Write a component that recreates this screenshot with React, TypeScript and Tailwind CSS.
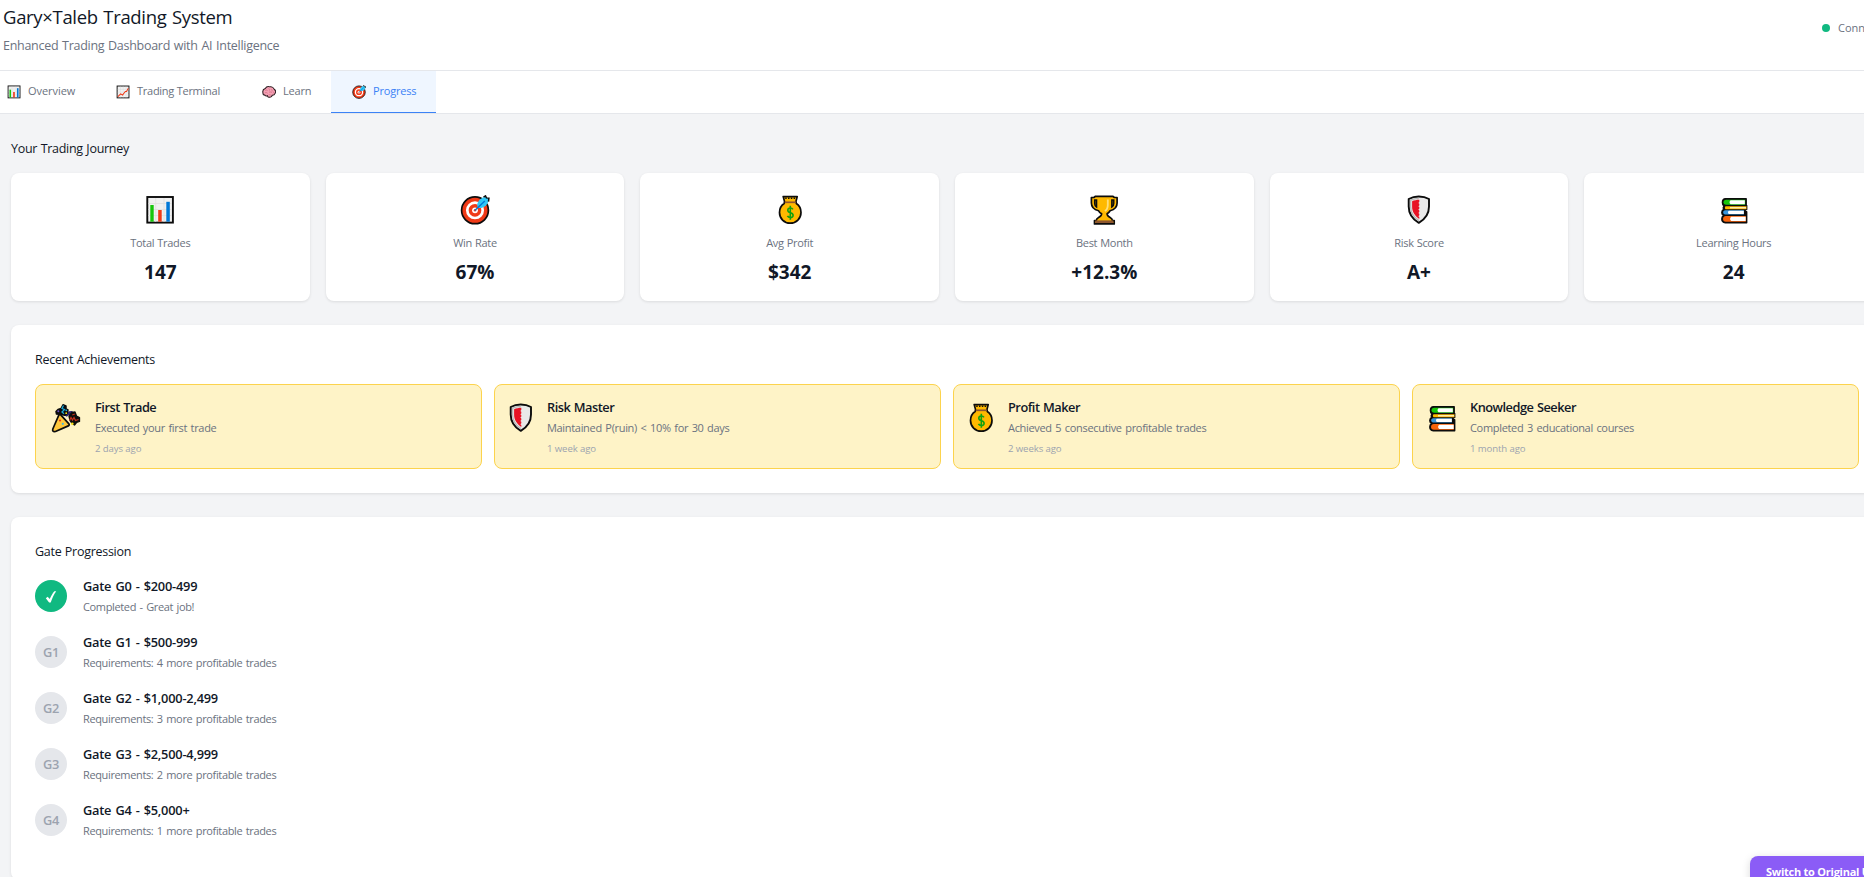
import type { ComponentType, SVGProps } from 'react';

type Icon = ComponentType<SVGProps<SVGSVGElement>>;

const ChartIcon: Icon = (props) => (
  <svg viewBox="0 0 30 30" {...props}>
    <rect x="2.3" y="2" width="25.6" height="25.6" fill="#f0f0f0" stroke="#0c0c0c" strokeWidth="1.9" />
    <path d="M3.2 8.5H27M3.2 14.5H27M3.2 20.5H27M10.7 3v24M19 3v24" stroke="#dcdcdc" strokeWidth=".7" />
    <rect x="5.3" y="10" width="3.4" height="16.7" fill="#16c60c" />
    <rect x="13.2" y="15" width="3.5" height="11.7" fill="#f03a17" />
    <rect x="21.3" y="6.8" width="3.5" height="19.9" fill="#0078d7" />
  </svg>
);

const TrendIcon: Icon = (props) => (
  <svg viewBox="0 0 30 30" {...props}>
    <rect x="2.4" y="2.2" width="25.4" height="25.4" fill="#f2f2f2" stroke="#0c0c0c" strokeWidth="2" />
    <path d="M3.5 9.5H27M3.5 15.5H27M3.5 21.5H27M9.5 3v24M15.5 3v24M21.5 3v24" stroke="#d8d8d8" strokeWidth=".9" />
    <path d="M4 25 10 19l4 2.500 6-7.500 2.500 0L26.500 7" fill="none" stroke="#f03a17" strokeWidth="2.200" />
  </svg>
);

const BrainIcon: Icon = (props) => (
  <svg viewBox="0 0 30 30" {...props}>
    <path
      d="M2 17C.8 12 4 8.500 7 7.500 9 4 14 3 17 4c4-.8 8 2 9 5 3 2 3.800 6 2 9-1 3-4 4-6 4-1 3-4 5-6.500 4-2 .5-3.500-1-4-3-3 1-5 0-5.500-1.500C3.500 21.500 2 19.500 2 17Z"
      fill="#f4a0b3"
      stroke="#2a1a1e"
      strokeWidth="2.200"
    />
    <path
      d="M7 12c2-2 4-1 5 0M14 8c2 0 3 2 2 4M20 9c2 1 2 3 1 5M6 17c3-2 5 0 6 1M15 16c2-2 5-1 6 1M24 14c1 1 1 3 0 4M14 21c2-1 4 0 5 1"
      fill="none"
      stroke="#c8607a"
      strokeWidth="1.300"
    />
  </svg>
);

const TargetIcon: Icon = (props) => (
  <svg viewBox="0 0 30 30" {...props}>
    <circle cx="15" cy="15.300" r="13.400" fill="#f03a17" stroke="#0c0c0c" strokeWidth="1.700" />
    <circle cx="15" cy="15.300" r="7.700" fill="none" stroke="#fff" strokeWidth="2.700" />
    <circle cx="15" cy="15.300" r="2.900" fill="#fff" />
    <circle cx="15" cy="15.300" r="1.200" fill="#f03a17" />
    <path d="M17.200 11.200C17 7 19.500 3.600 24 2.200l1.400-.8.800 1.600 2.600.1-.6 3.700C26.800 11 23 13.700 18.600 13Z" fill="#2fc8f7" />
    <path d="M23.500 2.200 25.500.9l.9 2 2.500.2-.4 3.600" fill="none" stroke="#0c0c0c" strokeWidth="1.500" />
    <path d="m14.800 15.500 10-9.600" stroke="#0078d7" strokeWidth="1.400" />
  </svg>
);

const MoneyIcon: Icon = (props) => (
  <svg viewBox="0 0 30 30" {...props}>
    <path
      d="M8.200 1.600h14l-1.200 4.800.3 2.100C24.400 10.500 26 14 26 17.500c0 6-4.700 10.700-10.800 10.700S4.500 23.500 4.500 17.500c0-3.500 1.600-7 4.700-9l.3-2.100Z"
      fill="#ffb900"
      stroke="#0c0c0c"
      strokeWidth="1.700"
      strokeLinejoin="round"
    />
    <path d="M10.200 3.200h10" stroke="#0c0c0c" strokeWidth="1.400" strokeDasharray="1.500 1.300" />
    <path d="M9.800 7.300h11" stroke="#8e562e" strokeWidth="1.700" />
    <path
      d="M17.900 14.300c-.5-1-1.500-1.300-2.600-1.300-1.500 0-2.500.8-2.500 2.200 0 3.300 5.300 1.700 5.300 5 0 1.500-1.200 2.300-2.800 2.300-1.300 0-2.300-.5-2.800-1.600M15.300 10.800v14"
      fill="none"
      stroke="#13a10e"
      strokeWidth="1.600"
    />
  </svg>
);

const TrophyIcon: Icon = (props) => (
  <svg viewBox="0 0 30 30" {...props}>
    <path
      d="M6.500 1.300h17.200l1.700 1.200h2.700v5.500c0 4-3.200 6.800-7 7.800-.7 1.200-1.800 2.200-3 3 0 1.700 1.200 2.800 3 3.800 1.500.8 2.300 2 2.300 3h1.800v3.300H5.500v-3.300h1.800c0-1 .8-2.200 2.300-3 1.800-1 3-2.100 3-3.800-1.300-.8-2.400-1.800-3-3-4-1-7.200-3.800-7.200-7.800V2.500h2.500Z"
      fill="#ffb900"
      stroke="#0c0c0c"
      strokeWidth="1.700"
      strokeLinejoin="round"
    />
    <path d="M5.600 5v3.600c0 1.600.8 2.800 2 3.500V5ZM24.800 5v3.600c0 1.600-.8 2.800-2 3.500V5Z" fill="#6b5200" stroke="#0c0c0c" strokeWidth="1.400" />
    <path d="M18.800 4.500V10c0 3-1 5-3 6" fill="none" stroke="#ffdf7a" strokeWidth="1.800" />
    <rect x="6.300" y="25.400" width="18" height="2.600" fill="#8e562e" />
  </svg>
);

const ShieldIcon: Icon = (props) => (
  <svg viewBox="0 0 30 30" {...props}>
    <path
      d="M14.800 1.500C18.500 1.500 22 2.300 25 4v7.500c0 7-4 12.800-10.200 16.300C8.600 24.300 4.700 18.500 4.700 11.500V4c3-1.700 6.400-2.500 10.100-2.500Z"
      fill="#e9e9e9"
      stroke="#0c0c0c"
      strokeWidth="1.900"
      strokeLinejoin="round"
    />
    <path d="M14.800 3.400c-3 0-5.700.6-8.200 1.800v6.300c0 6 3.200 10.900 8.200 14.100" fill="none" stroke="#b9b9b9" strokeWidth="1.300" />
    <path
      d="M15.300 4.800c-2.500 0-5 .5-7.200 1.500v5.200c0 5.200 2.700 9.500 7.200 12.500v-2l-1-.8 1-.9v-1.600l-1-.8 1-.9v-1.600l-1-.8 1-.9v-1.600l-1-.8 1-.9V8.800l-1-.8 1-.9Z"
      fill="#e81224"
    />
  </svg>
);

const BooksIcon: Icon = (props) => (
  <svg viewBox="0 0 30 30" {...props}>
    <path
      d="M6.500 3.700h20.700v6.700h.5v4.200h-1.500v2.200h1.500v10.900H6.200C3.800 27.700 2.800 26 2.800 24c0-1.600.6-2.700 1.500-3.500-1-.8-1.500-1.800-1.500-3 0-1.500.8-2.600 2-3.300-.6-1-.6-2.300.1-3.300C3.800 10.200 3.400 9 3.400 7.500c0-2.200 1.100-3.800 3.100-3.800Z"
      fill="#0c0c0c"
      stroke="#0c0c0c"
      strokeWidth="1.400"
      strokeLinejoin="round"
    />
    <path d="M7.200 4.800h19v5H7.200c-1.800 0-2.700-1-2.700-2.500s.9-2.500 2.700-2.500Z" fill="#16c60c" />
    <path d="M11.500 5.200h14.300v4H11.500c-1.300-1.200-1.300-2.800 0-4Z" fill="#fff" />
    <path d="M6.500 11.200h21v3h-21c-.8-.8-.8-2.200 0-3Z" fill="#ffb900" />
    <path d="M11 12.100h16v1.300H11Z" fill="#fff3c4" />
    <path d="M6.200 15.300h18.700v4.100H6.200c-2.700 0-2.700-4.100 0-4.100Z" fill="#3a96dd" />
    <path d="M9.800 15.700h15v3.300h-15c-1.100-1-1.100-2.300 0-3.300Z" fill="#fff" />
    <path d="M6.800 21h20v5.800h-20c-3.700 0-3.700-5.800 0-5.800Z" fill="#f7630c" />
    <path d="M12.200 21.700h14.500v4.300H12.200c-1.500-1.200-1.500-3.100 0-4.300Z" fill="#fff" />
  </svg>
);

const PartyIcon: Icon = (props) => (
  <svg viewBox="0 0 30 30" {...props}>
    <path d="M14.500 13c1.500-2.500 4.500-3.500 7-3.300" fill="none" stroke="#2c2270" strokeWidth="3.200" />
    <path
      d="m7 6.500 3-1L12 1.800 15 3v3l2 1-1 3.500-2.200 1.800-3.300-.8L5.500 11 5 8.500Z"
      fill="#0c0c0c"
      stroke="#0c0c0c"
      strokeWidth="1.500"
      strokeLinejoin="round"
    />
    <path
      d="m18 13 3-3.500 3-.5 1.500 4 3 1.500v4l-3 1-2 2.500-2.500-1.500-2-3Z"
      fill="#0c0c0c"
      stroke="#0c0c0c"
      strokeWidth="1.300"
      strokeLinejoin="round"
    />
    <path d="m12.500 2.500-1.500 3 2.500 1-2.500 2.500 2 1.700" fill="none" stroke="#1ba8d8" strokeWidth="1.300" />
    <path d="m18.500 17.500 1.500-3 1.500 2.500 1.500-2.500 1.500 3 3-1" fill="none" stroke="#c5301c" strokeWidth="1.300" />
    <path d="m21.300 12 2.500-1" stroke="#c5301c" strokeWidth="1.300" />
    <circle cx="7.300" cy="8.300" r="1" fill="#6b52c8" />
    <circle cx="15.300" cy="7.300" r=".9" fill="#1ba8d8" />
    <circle cx="21.300" cy="20.800" r="1.300" fill="#f9e21b" />
    <circle cx="15.200" cy="10.200" r=".9" fill="#f9e21b" />
    <path
      d="M7.800 12.200c1-.8 1.800-.6 2.600.4l7.300 8c.8 1 .7 1.700-.4 2.300L4.500 28.500C2 29 1.300 28 1.800 26Z"
      fill="#ffc83d"
      stroke="#0c0c0c"
      strokeWidth="1.700"
      strokeLinejoin="round"
    />
    <circle cx="9" cy="17.500" r="1.100" fill="#f03a17" />
    <circle cx="11.800" cy="20.800" r="1.100" fill="#3ab8e8" />
  </svg>
);

const CheckIcon: Icon = (props) => (
  <svg viewBox="0 0 12 12" {...props}>
    <path d="M.8 7.200 2.700 5.700l2 2.300C6.200 4.800 7.600 2.200 9.400.2h1.800C8.800 3.600 7.200 7 5.700 11.600H4.100Z" fill="#fff" />
  </svg>
);

const tabs: { icon: Icon; label: string; box: string }[] = [
  { icon: ChartIcon, label: 'Overview', box: 'w-[96px] pl-[7px] gap-[7px] tracking-[-0.05px]' },
  { icon: TrendIcon, label: 'Trading Terminal', box: 'w-[146px] pl-5 gap-[7px] tracking-[-0.26px]' },
  { icon: BrainIcon, label: 'Learn', box: 'w-[89px] pl-5 gap-[7px] tracking-[-0.2px]' },
  { icon: TargetIcon, label: 'Progress', box: 'w-[105px] pl-[21px] gap-[7px] tracking-[-0.2px]' },
];

const stats: { icon: Icon; label: string; value: string }[] = [
  { icon: ChartIcon, label: 'Total Trades', value: '147' },
  { icon: TargetIcon, label: 'Win Rate', value: '67%' },
  { icon: MoneyIcon, label: 'Avg Profit', value: '$342' },
  { icon: TrophyIcon, label: 'Best Month', value: '+12.3%' },
  { icon: ShieldIcon, label: 'Risk Score', value: 'A+' },
  { icon: BooksIcon, label: 'Learning Hours', value: '24' },
];

const achievements: { icon: Icon; box: string; title: string; text: string; time: string }[] = [
  { icon: PartyIcon, box: 'w-[31px]', title: 'First Trade', text: 'Executed your first trade', time: '2 days ago' },
  { icon: ShieldIcon, box: 'w-[24px]', title: 'Risk Master', text: 'Maintained P(ruin) < 10% for 30 days', time: '1 week ago' },
  { icon: MoneyIcon, box: 'w-[26px]', title: 'Profit Maker', text: 'Achieved 5 consecutive profitable trades', time: '2 weeks ago' },
  { icon: BooksIcon, box: 'w-[29px]', title: 'Knowledge Seeker', text: 'Completed 3 educational courses', time: '1 month ago' },
];

const gates = [
  { id: 'G0', range: '$200-499', note: 'Completed - Great job!', done: true },
  { id: 'G1', range: '$500-999', note: 'Requirements: 4 more profitable trades', done: false },
  { id: 'G2', range: '$1,000-2,499', note: 'Requirements: 3 more profitable trades', done: false },
  { id: 'G3', range: '$2,500-4,999', note: 'Requirements: 2 more profitable trades', done: false },
  { id: 'G4', range: '$5,000+', note: 'Requirements: 1 more profitable trades', done: false },
];

function Heading({ children }: { children: string }) {
  return (
    <h2 className="mb-3.5 pt-px text-[12.5px] leading-5 tracking-[-0.28px] text-[#111827] [word-spacing:0.5px]">
      {children}
    </h2>
  );
}

export default function App() {
  return (
    <div className="relative h-[877px] w-full overflow-hidden bg-[#f3f4f6] font-['Open_Sans','Noto_Sans',sans-serif] whitespace-nowrap text-[#111827]">
      <div className="w-[1894px]">
        <header className="flex h-[71px] justify-between border-b border-[#e5e7eb] bg-white pl-[3px]">
          <div className="pt-[5px]">
            <h1 className="text-[18.5px] leading-6 tracking-[-0.32px] [word-spacing:1px]">Gary×Taleb Trading System</h1>
            <p className="mt-[7px] text-[12.5px] leading-5 tracking-[-0.28px] text-[#6b7280] [word-spacing:0.8px]">
              Enhanced Trading Dashboard with AI Intelligence
            </p>
          </div>
          <div className="mt-5 flex h-4 w-[72px] items-center gap-2 self-start text-[11px] leading-4 text-[#6b7280]">
            <span className="size-2 shrink-0 rounded-full bg-[#10b981]" />
            Connected
          </div>
        </header>

        <nav className="flex h-[43px] border-b border-[#e5e7eb] bg-white">
          {tabs.map(({ icon: TabIcon, label, box }) => (
            <button
              key={label}
              className={`flex items-center border-b text-[11px] font-medium ${box} ${
                label === 'Progress' ? 'border-[#3b82f6] bg-[#eff6ff] text-[#3b82f6]' : 'border-transparent text-[#6b7280]'
              }`}
            >
              <TabIcon className="size-3.5 shrink-0" />
              {label}
            </button>
          ))}
        </nav>

        <main className="px-[11px] pt-6">
          <Heading>Your Trading Journey</Heading>
          <div className="mb-6 grid grid-cols-6 gap-4">
            {stats.map(({ icon: StatIcon, label, value }) => (
              <div
                key={label}
                className="flex h-32 flex-col items-center rounded-lg bg-white pt-[22px] shadow-[0_1px_3px_rgba(0,0,0,0.1)]"
              >
                <StatIcon className="size-[30px]" />
                <div className="mt-2.5 text-[11px] leading-4 tracking-[-0.3px] text-[#6b7280] [word-spacing:0.5px]">{label}</div>
                <div className="mt-[9px] text-[19px] leading-6 font-bold">{value}</div>
              </div>
            ))}
          </div>

          <section className="mb-6 h-[168px] rounded-lg bg-white p-6 shadow-[0_1px_3px_rgba(0,0,0,0.1)]">
            <Heading>Recent Achievements</Heading>
            <div className="grid grid-cols-4 gap-3">
              {achievements.map(({ icon: AwardIcon, box, title, text, time }) => (
                <div key={title} className="flex h-[85px] gap-3 rounded-lg border border-[#fcd34d] bg-[#fef3c7] px-4">
                  <div className={`mt-[18px] flex shrink-0 justify-center ${box}`}>
                    <AwardIcon className="mr-[3px] -ml-px size-[30px] shrink-0" />
                  </div>
                  <div className="pt-[13px]">
                    <div className="text-[12.8px] leading-[18px] font-semibold tracking-[-0.5px] [word-spacing:0.7px]">{title}</div>
                    <div className="mt-1 text-[11px] leading-4 tracking-[-0.32px] text-[#6b7280] [word-spacing:1px]">{text}</div>
                    <div className="mt-1.5 text-[9.6px] leading-[14px] tracking-[-0.1px] text-[#9ca3af]">{time}</div>
                  </div>
                </div>
              ))}
            </div>
          </section>

          <section className="h-[363px] rounded-lg bg-white p-6 shadow-[0_1px_3px_rgba(0,0,0,0.1)]">
            <Heading>Gate Progression</Heading>
            <div className="flex flex-col gap-4">
              {gates.map(({ id, range, note, done }) => (
                <div key={id} className="flex h-10 items-center gap-4">
                  <div
                    className={`flex size-8 shrink-0 items-center justify-center rounded-full pt-px text-[12.8px] font-semibold tracking-[-0.3px] ${
                      done ? 'bg-[#10b981] text-white' : 'bg-[#e5e7eb] text-[#9ca3af]'
                    }`}
                  >
                    {done ? <CheckIcon className="size-3" /> : id}
                  </div>
                  <div className="pb-0.5">
                    <div className="text-[12.8px] leading-5 font-semibold tracking-[-0.22px] [word-spacing:1px]">
                      Gate {id} - {range}
                    </div>
                    <div className="mt-[3px] text-[11px] leading-4 tracking-[-0.36px] text-[#6b7280] [word-spacing:1px]">{note}</div>
                  </div>
                </div>
              ))}
            </div>
          </section>
        </main>
      </div>

      <button className="absolute top-[856px] left-[1750px] flex h-9 w-[144px] rounded-lg bg-[#8b5cf6] pt-2 pl-4 text-left text-[11px] leading-4 font-bold tracking-[-0.25px] text-white shadow-[0_2px_8px_rgba(0,0,0,0.15)]">
        Switch to Original UI
      </button>
    </div>
  );
}
